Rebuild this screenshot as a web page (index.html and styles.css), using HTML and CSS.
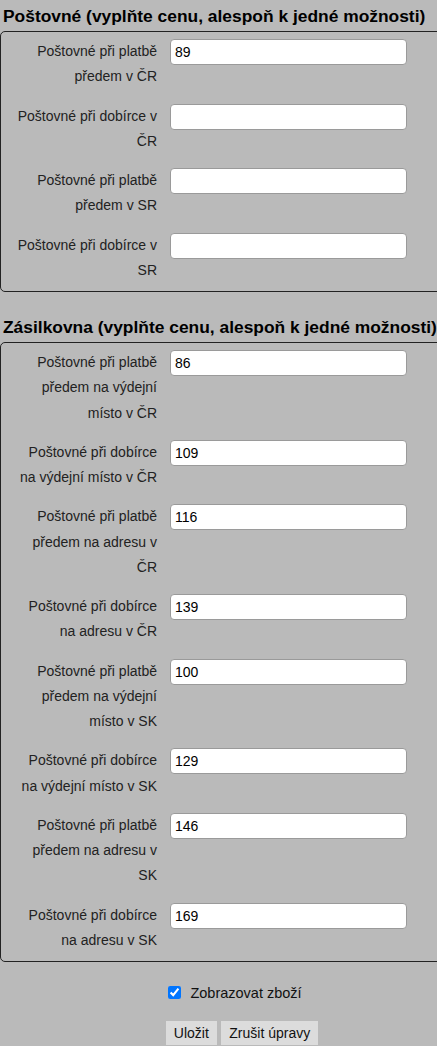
FILE: index.html
```html
<!DOCTYPE html>
<html lang="cs">
<head>
    <meta charset="UTF-8">
    <meta name="viewport" content="width=device-width, initial-scale=1.0">
    <title>Nastavení poštovného</title>
    <link rel="stylesheet" href="styles.css">
</head>
<body>

    <form class="settings">
        <h3 class="group-title">Poštovné (vyplňte cenu, alespoň k jedné možnosti)</h3>
        <div class="group">
            <div class="row">
                <label class="row-label" for="p1">Poštovné při platbě předem v ČR</label>
                <input class="row-input" type="text" id="p1" value="89">
            </div>
            <div class="row">
                <label class="row-label" for="p2">Poštovné při dobírce v ČR</label>
                <input class="row-input" type="text" id="p2" value="">
            </div>
            <div class="row">
                <label class="row-label" for="p3">Poštovné při platbě předem v SR</label>
                <input class="row-input" type="text" id="p3" value="">
            </div>
            <div class="row">
                <label class="row-label" for="p4">Poštovné při dobírce v SR</label>
                <input class="row-input" type="text" id="p4" value="">
            </div>
        </div>

        <h3 class="group-title">Zásilkovna (vyplňte cenu, alespoň k jedné možnosti)</h3>
        <div class="group">
            <div class="row">
                <label class="row-label" for="z1">Poštovné při platbě předem na výdejní místo v ČR</label>
                <input class="row-input" type="text" id="z1" value="86">
            </div>
            <div class="row">
                <label class="row-label" for="z2">Poštovné při dobírce na výdejní místo v ČR</label>
                <input class="row-input" type="text" id="z2" value="109">
            </div>
            <div class="row">
                <label class="row-label" for="z3">Poštovné při platbě předem na adresu v ČR</label>
                <input class="row-input" type="text" id="z3" value="116">
            </div>
            <div class="row">
                <label class="row-label" for="z4">Poštovné při dobírce na adresu v ČR</label>
                <input class="row-input" type="text" id="z4" value="139">
            </div>
            <div class="row">
                <label class="row-label" for="z5">Poštovné při platbě předem na výdejní místo v SK</label>
                <input class="row-input" type="text" id="z5" value="100">
            </div>
            <div class="row">
                <label class="row-label" for="z6">Poštovné při dobírce na výdejní místo v SK</label>
                <input class="row-input" type="text" id="z6" value="129">
            </div>
            <div class="row">
                <label class="row-label" for="z7">Poštovné při platbě předem na adresu v SK</label>
                <input class="row-input" type="text" id="z7" value="146">
            </div>
            <div class="row">
                <label class="row-label" for="z8">Poštovné při dobírce na adresu v SK</label>
                <input class="row-input" type="text" id="z8" value="169">
            </div>
        </div>

        <div class="show-goods">
            <label><input type="checkbox" checked> Zobrazovat zboží</label>
        </div>

        <div class="actions">
            <button type="button">Uložit</button>
            <button type="button">Zrušit úpravy</button>
        </div>
    </form>

</body>
</html>
```

FILE: styles.css
```css
html, body {
    overflow: hidden;
}
body {
    font-family: "Liberation Sans", Arial, sans-serif;
    margin: 0;
    background-color: #bababa;
    color: #111;
}
.settings {
    width: 470px;
}
.group-title {
    font-size: 17.4px;
    line-height: 24px;
    margin: 4px 0 3px 3px;
    color: #000;
}
.group {
    border: 1px solid #222;
    border-radius: 5px;
    margin-bottom: 23px;
}
.row {
    display: flex;
    align-items: flex-start;
    padding: 7px 0 7px 9px;
}
.row:last-child {
    padding-bottom: 8px;
}
.row-label {
    width: 147px;
    margin-right: 13px;
    text-align: right;
    font-size: 14px;
    line-height: 25.25px;
    color: #222;
}
.row-input {
    width: 237px;
    height: 26px;
    box-sizing: border-box;
    padding: 0 4px;
    border: 1px solid #9a9a9a;
    border-radius: 4px;
    background-color: white;
    font-family: "Liberation Sans", Arial, sans-serif;
    font-size: 14px;
    color: #000;
}
.show-goods {
    text-align: center;
    margin-top: 19px;
    font-size: 14.5px;
}
.show-goods input {
    margin: 0 5px 0 0;
    vertical-align: -1px;
}
.actions {
    text-align: center;
    margin-top: 20px;
    padding-left: 14px;
}
.actions button {
    padding: 4px 8px;
    background-color: #dcdcdc;
    border: none;
    font-family: "Liberation Sans", Arial, sans-serif;
    font-size: 14px;
    color: #111;
}
```
